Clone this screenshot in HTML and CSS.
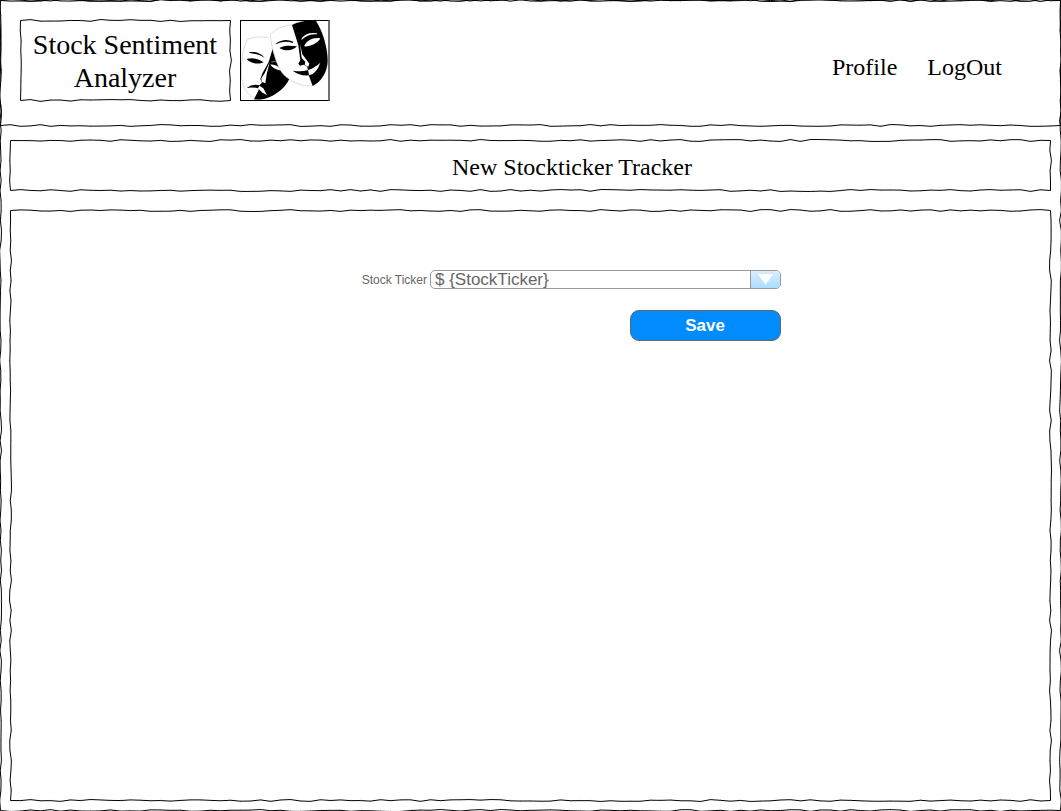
FILE: index.html
```html
<!DOCTYPE html>
<html lang="en">
<head>
<meta charset="utf-8">
<title>Stock Sentiment Analyzer</title>
<link rel="stylesheet" href="styles.css">
</head>
<body>
<div class="page sketch">
  <header class="header sketch">
    <h1 class="brand sketch">Stock Sentiment Analyzer</h1>
    <svg class="masks" viewBox="12 18 270 243" aria-label="Theatre masks">
      <rect x="12" y="18" width="270" height="243" fill="#fff"/>
      <path d="M98 72C80 66 48 68 33 78C20 102 14 150 17 190C21 222 35 245 57 256C95 262 145 226 158 194" fill="none" stroke="#bbb" stroke-width="1.5"/>
      <path d="M110 104L98 144L80 176L73 195L78 206L70 214L68 228L54 256C95 262 145 230 160 194C150 185 134 165 124 140Z"/>
      <path d="M101 144L86 178L76 193L77 203L88 208L92 181Z" fill="#fff"/>
      <path d="M68 214L82 223L93 244L78 235L68 225Z" fill="#fff"/>
      <path d="M103 152C115 150 128 156 138 170C122 168 110 162 103 152Z" fill="#fff"/>
      <path d="M106 144Q116 140 127 145" fill="none" stroke="#777" stroke-width="3"/>
      <path d="M40 115C58 111 75 116 86 132C70 120 55 120 40 117ZM32 135C48 130 67 134 83 145C66 153 43 148 32 135ZM32 222Q50 208 71 214L66 223Q50 218 32 222Z"/>
      <path d="M103 62C115 45 144 34 168 33C185 24 218 17 240 21C259 50 275 100 275 141C274 177 253 205 228 216C198 218 164 203 144 183C123 162 105 98 103 62Z" fill="#fff" stroke="#bbb" stroke-width="1.5"/>
      <path d="M168 33C190 22 220 17 240 21C259 50 275 100 275 141C274 177 253 205 230 216L218 183L214 158L203 152L192 155L187 149L193 138L187 94Z"/>
      <path d="M192 90L199 121L220 149L217 158L206 153L208 143L197 132Z" fill="#fff"/>
      <path d="M119 89Q145 70 172 83L170 87Q144 78 119 91ZM130 102C145 93 165 95 183 97C170 111 147 113 130 102ZM170 170Q197 175 216 168L219 184Q192 187 170 170Z"/>
      <path d="M204 97C212 78 233 69 253 73C246 88 222 99 204 97ZM197 73Q213 52 244 58L242 61Q215 59 197 78ZM216 168Q236 162 253 146Q242 178 220 184Z" fill="#fff"/>
      <path d="M13.5 18V261M12 19.5H282M12 259.5H282" fill="none" stroke="#000" stroke-width="3"/>
      <path d="M279 18V261" fill="none" stroke="#555" stroke-width="5"/>
    </svg>
    <nav class="nav"><span>Profile</span><span>LogOut</span></nav>
  </header>
  <section class="title sketch"><h2>New Stockticker Tracker</h2></section>
  <main class="panel sketch">
    <div class="field">
      <span class="label">Stock Ticker</span>
      <div class="combo">
        <span class="value">$ {StockTicker}</span>
        <span class="drop"><svg class="arrow" viewBox="0 0 16 11"><path d="M0 0H16L8 11Z" fill="#fff"/></svg></span>
      </div>
    </div>
    <button class="save">Save</button>
  </main>
</div>
<script src="sketch.js"></script>
</body>
</html>
```
FILE: styles.css
```css
* { box-sizing: border-box; }
body { margin: 0; background: #fff; font-family: "Liberation Serif", serif; color: #000; }
h1, h2 { margin: 0; font-weight: 400; }
.page { width: 1061px; height: 811px; overflow: hidden; }
.sketch { position: relative; }
.outline { position: absolute; left: 0; top: 0; width: 100%; height: 100%; overflow: visible; pointer-events: none; }
.outline path { fill: none; stroke: #000; stroke-width: 1; stroke-miterlimit: 10; }
.outline .tick { stroke-width: 0.5; opacity: 0.4; }
.header { display: flex; align-items: flex-start; height: 126px; padding: 20px 59px 0 20px; }
.brand { width: 211px; height: 81px; padding: 8px 11px 8px 10px; font-size: 28px; line-height: 33px; text-align: center; }
.masks { display: block; width: 90px; height: 81px; margin-left: 9px; }
.nav { display: flex; gap: 30px; margin: 33px 0 0 auto; font-size: 24px; line-height: 28px; }
.title { height: 51px; margin: 14px 10px 0; padding: 13px 0 0 442px; }
.title h2 { font-size: 24px; line-height: 28px; white-space: nowrap; }
.panel { display: flex; flex-direction: column; height: 591px; margin: 19px 10px 0; padding: 60px 270px 0 0; align-items: flex-end; font-family: "Liberation Sans", sans-serif; }
.field { display: flex; align-items: flex-start; height: 19px; gap: 3px; }
.label { color: #666; font-size: 12px; line-height: 21px; white-space: nowrap; }
.combo { display: flex; width: 351px; height: 19px; border: 1px solid #999; border-radius: 5px; overflow: hidden; }
.value { flex: 1; padding-left: 4px; color: #666; font-size: 17px; line-height: 18px; }
.drop { display: flex; justify-content: center; width: 30px; padding-top: 3px; border-left: 1px solid #999; background: linear-gradient(#dbeeff, #aaddff); }
.arrow { width: 15px; height: 11px; }
.save { width: 151px; height: 31px; margin-top: 21px; padding: 0 1px 0 0; border: 1px solid #666; border-radius: 9px; background: #008cff; color: #fff; font: bold 17px/29px "Liberation Sans", sans-serif; }
```
FILE: sketch.js
```js
// Draws a slightly wavering, hand-drawn outline around every .sketch element.
let seed = 17;
function jitter() {
  seed = (seed * 16807) % 2147483647;
  return (seed / 2147483647 - 0.5) * 2;
}
function outline(el) {
  const w = el.offsetWidth - 1, h = el.offsetHeight - 1;
  const corners = [[0, 0], [w, 0], [w, h], [0, h], [0, 0]];
  let line = 'M0.5 0.5', ticks = '';
  for (let i = 0; i < 4; i++) {
    const [x0, y0] = corners[i], [x1, y1] = corners[i + 1];
    const length = Math.hypot(x1 - x0, y1 - y0);
    const dx = (x1 - x0) / length, dy = (y1 - y0) / length;
    for (let d = 10; d < length; d += 10) {
      const j = jitter();
      const x = x0 + dx * d - dy * j + 0.5, y = y0 + dy * d + dx * j + 0.5;
      line += `L${x.toFixed(2)} ${y.toFixed(2)}`;
      ticks += `M${x - dy} ${y - dx}L${x + dy} ${y + dx}`;
    }
    line += `L${x1 + 0.5} ${y1 + 0.5}`;
  }
  el.insertAdjacentHTML('beforeend',
    `<svg class="outline"><path d="${line}"/><path class="tick" d="${ticks}"/></svg>`);
}
document.querySelectorAll('.sketch').forEach(outline);
```
